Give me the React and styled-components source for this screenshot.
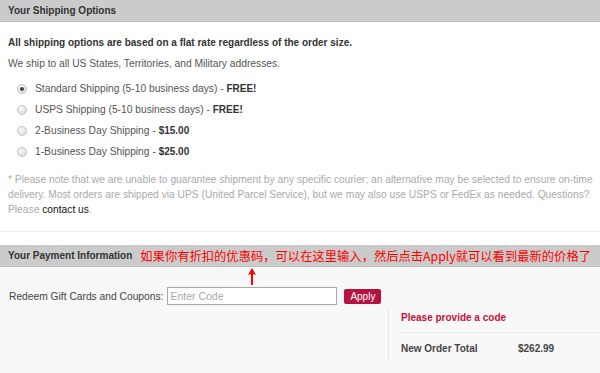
import styled, { createGlobalStyle } from "styled-components";

const GlobalStyle = createGlobalStyle`
  html, body {
    margin: 0;
    padding: 0;
    background: #fff;
  }
  body {
    font-family: "Liberation Sans", Arial, sans-serif;
    font-size: 10.25px;
    color: #555;
  }
`;

const shippingOptions = [
  { label: "Standard Shipping (5-10 business days)", price: "FREE!", checked: true },
  { label: "USPS Shipping (5-10 business days)", price: "FREE!" },
  { label: "2-Business Day Shipping", price: "$15.00" },
  { label: "1-Business Day Shipping", price: "$25.00" },
];

function App() {
  return (
    <Page>
      <GlobalStyle />
      <HeaderBar>
        <h2>Your Shipping Options</h2>
      </HeaderBar>
      <ShippingBody>
        <Lead>All shipping options are based on a flat rate regardless of the order size.</Lead>
        <Text>We ship to all US States, Territories, and Military addresses.</Text>
        <OptionList>
          {shippingOptions.map((o) => (
            <Option key={o.label}>
              <Radio checked={o.checked} />
              <span>
                {o.label} - <b>{o.price}</b>
              </span>
            </Option>
          ))}
        </OptionList>
        <Note>
          * Please note that we are unable to guarantee shipment by any specific courier; an alternative may be
          selected to ensure on-time
          <br />
          delivery. Most orders are shipped via UPS (United Parcel Service), but we may also use USPS or FedEx as
          needed. Questions?
          <br />
          Please <a>contact us</a>.
        </Note>
      </ShippingBody>

      <HeaderBar>
        <h2>Your Payment Information</h2>
        <Annotation>
          如果你有折扣的优惠码，可以在这里输入，然后点击Apply就可以看到最新的价格了
          <Arrow width="8" height="17" viewBox="0 0 8 17">
            <path d="M4 0 L8 7 L5 6 L5 17 L3 17 L3 6 L0 7 Z" fill="#f00" />
          </Arrow>
        </Annotation>
      </HeaderBar>
      <PaymentBody>
        <RedeemRow>
          <label>Redeem Gift Cards and Coupons:</label>
          <CodeInput placeholder="Enter Code" />
          <ApplyBtn>Apply</ApplyBtn>
        </RedeemRow>
        <SummaryRow>
          <Summary>
            <ErrorMsg>Please provide a code</ErrorMsg>
            <TotalRow>
              <span>New Order Total</span>
              <span>$262.99</span>
            </TotalRow>
          </Summary>
        </SummaryRow>
      </PaymentBody>
    </Page>
  );
}

export default App;

const Page = styled.div`
  width: 600px;
  height: 373px;
  overflow: hidden;
  display: flex;
  flex-direction: column;
`;

const HeaderBar = styled.div`
  position: relative;
  height: 21px;
  flex-shrink: 0;
  background: #cbcbcb;
  border-bottom: 1px solid #bdbdbd;
  display: flex;
  align-items: center;
  padding: 0 8px;
  white-space: nowrap;
  h2 {
    margin: 0;
    font-size: 10px;
    font-weight: bold;
    color: #333;
  }
`;

const ShippingBody = styled.div`
  padding: 13px 8px 14px;
  border-bottom: 1px solid #eee;
  margin-bottom: 13px;
`;

const Lead = styled.p`
  margin: 0;
  line-height: 16px;
  font-size: 10px;
  font-weight: bold;
  color: #333;
`;

const Text = styled.p`
  margin: 5px 0 0;
  line-height: 16px;
  color: #555;
`;

const OptionList = styled.div`
  margin: 6px 0 0;
  padding-left: 9px;
`;

const Option = styled.div`
  height: 21px;
  display: flex;
  align-items: center;
  gap: 8px;
  color: #555;
  b {
    font-size: 10px;
    color: #333;
  }
`;

const Radio = styled.span`
  width: 10px;
  height: 10px;
  border-radius: 50%;
  box-sizing: border-box;
  border: 1px solid #c4c4c4;
  background: radial-gradient(circle at 40% 35%, #fafafa 0%, #dcdcdc 80%);
  display: flex;
  align-items: center;
  justify-content: center;
  &::after {
    content: "";
    width: 4px;
    height: 4px;
    border-radius: 50%;
    background: ${(p) => (p.checked ? "#444" : "transparent")};
  }
`;

const Note = styled.p`
  margin: 10px 0 0;
  line-height: 15px;
  color: #aaa;
  white-space: nowrap;
  a {
    color: #111;
  }
`;

const Annotation = styled.span`
  position: relative;
  margin-left: 8px;
  font-family: "Noto Sans CJK SC", sans-serif;
  font-size: 12.3px;
  color: #f00;
`;

const Arrow = styled.svg`
  position: absolute;
  left: 108px;
  top: 21px;
`;

const PaymentBody = styled.div`
  flex: 1;
  background: #f8f8f8;
`;

const RedeemRow = styled.div`
  display: flex;
  align-items: center;
  padding: 20px 9px 0;
  color: #444;
  label {
    margin-right: 4px;
  }
`;

const CodeInput = styled.input`
  width: 170px;
  height: 18px;
  box-sizing: border-box;
  border: 1px solid #aaa;
  background: #fff;
  padding: 0 2px;
  font-family: "Liberation Sans", Arial, sans-serif;
  font-size: 10.5px;
  &::placeholder {
    color: #aaa;
  }
`;

const ApplyBtn = styled.button`
  margin-left: 7px;
  width: 37px;
  height: 15px;
  padding: 0;
  border: none;
  border-radius: 2px;
  background: #b5123f;
  color: #fff;
  font-family: "Liberation Sans", Arial, sans-serif;
  font-size: 10px;
`;

const SummaryRow = styled.div`
  display: flex;
  justify-content: flex-end;
  margin-top: 4px;
`;

const Summary = styled.div`
  width: 199px;
  border-left: 1px solid #eaeaea;
  padding: 1px 0 5px 12px;
`;

const ErrorMsg = styled.div`
  line-height: 16px;
  font-size: 10px;
  padding-bottom: 6px;
  border-bottom: 1px solid #eaeaea;
  font-weight: bold;
  color: #c4103c;
`;

const TotalRow = styled.div`
  display: flex;
  line-height: 16px;
  margin-top: 8px;
  font-size: 10px;
  font-weight: bold;
  color: #444;
  span:first-child {
    width: 117px;
  }
`;
